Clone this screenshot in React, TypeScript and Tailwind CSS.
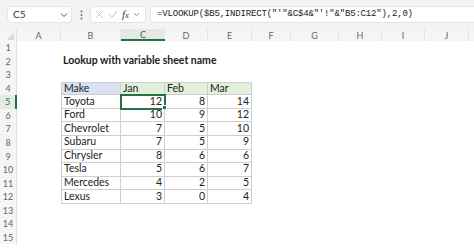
import React from 'react'

const cols = [
  { l: 'A', w: 44 },
  { l: 'B', w: 60 },
  { l: 'C', w: 44 },
  { l: 'D', w: 43 },
  { l: 'E', w: 44 },
  { l: 'F', w: 39 },
  { l: 'G', w: 48 },
  { l: 'H', w: 43 },
  { l: 'I', w: 43 },
  { l: 'J', w: 44 },
  { l: '', w: 40 },
]

const data: [string, number, number, number][] = [
  ['Toyota', 12, 8, 14],
  ['Ford', 10, 9, 12],
  ['Chevrolet', 7, 5, 10],
  ['Subaru', 7, 5, 9],
  ['Chrysler', 8, 6, 6],
  ['Tesla', 5, 6, 7],
  ['Mercedes', 4, 2, 5],
  ['Lexus', 3, 0, 4],
]

const ROW = 'h-[13.57px]'

function TopBar() {
  return (
    <div className="h-[29px] bg-[#f3f3f3] flex items-center">
      <div className="ml-[7px] w-[65px] h-[17px] bg-white rounded-[4px] border border-[#e4e4e4] flex items-center justify-between pl-[5px] pr-[3px]">
        <span className="text-[10px] text-[#333]">C5</span>
        <svg width="8" height="6" viewBox="0 0 8 6" className="text-[#555]">
          <path d="M1 1.5 L4 4.5 L7 1.5" fill="none" stroke="currentColor" strokeWidth="1" />
        </svg>
      </div>
      <div className="w-[18px] flex justify-center">
        <svg width="3" height="10" viewBox="0 0 3 10">
          <circle cx="1.5" cy="1.5" r="0.9" fill="#666" />
          <circle cx="1.5" cy="5" r="0.9" fill="#666" />
          <circle cx="1.5" cy="8.5" r="0.9" fill="#666" />
        </svg>
      </div>
      <div className="w-[56px] h-[17px] bg-white rounded-[4px] border border-[#e4e4e4] flex items-center pl-[4px] gap-[4px]">
        <svg width="9" height="9" viewBox="0 0 9 9">
          <path d="M1 1 L8 8 M8 1 L1 8" stroke="#c8c8c8" strokeWidth="1" />
        </svg>
        <svg width="10" height="9" viewBox="0 0 10 9">
          <path d="M1 4.5 L3.8 7.5 L9 1" fill="none" stroke="#c8c8c8" strokeWidth="1" />
        </svg>
        <span className="italic text-[11px] font-['Liberation_Serif',serif] text-[#444] leading-none">
          f<span className="text-[9px]">x</span>
        </span>
        <svg width="7" height="5" viewBox="0 0 7 5">
          <path d="M1 1 L3.5 3.8 L6 1" fill="none" stroke="#888" strokeWidth="0.9" />
        </svg>
      </div>
      <div className="ml-[4px] flex-1 h-[17px] bg-white rounded-l-[4px] border border-r-0 border-[#e4e4e4] flex items-center pl-[6px]">
        <span className="font-['Liberation_Mono',monospace] text-[9px] text-[#222] tracking-[-0.02em] whitespace-nowrap">
          =VLOOKUP($B5,INDIRECT("'"&amp;C$4&amp;"'!"&amp;"B5:C12"),2,0)
        </span>
      </div>
    </div>
  )
}

function ColHeaders() {
  return (
    <div className="flex h-[12px] bg-[#f5f5f5]">
      <div className="w-[17px] shrink-0 relative border-r border-[#e0e0e0]">
        <svg width="7" height="7" viewBox="0 0 7 7" className="absolute right-[2px] bottom-[1px]">
          <path d="M7 0 L7 7 L0 7 Z" fill="#d8d8d8" />
        </svg>
      </div>
      {cols.map((c, i) => (
        <div
          key={i}
          style={{ width: c.w }}
          className={
            'shrink-0 flex items-center justify-center text-[9px] leading-none ' +
            (c.l === 'C'
              ? 'bg-[#e5e9e6] text-[#217346] border-b-2 border-[#217346]'
              : 'text-[#666] border-r border-[#e6e6e6]')
          }
        >
          {c.l}
        </div>
      ))}
    </div>
  )
}

function Cell({
  w,
  children,
  className = '',
}: {
  w: number
  children?: React.ReactNode
  className?: string
}) {
  return (
    <div style={{ width: w }} className={'shrink-0 flex items-center text-[10.5px] text-[#222] px-[2px] ' + className}>
      {children}
    </div>
  )
}

export default function App() {
  const rows = Array.from({ length: 15 }, (_, i) => i + 1)
  return (
    <div className="w-[474px] h-[248px] overflow-hidden bg-white font-['Lato',sans-serif]">
      <TopBar />
      <ColHeaders />
      {rows.map((r) => {
        const d = r >= 5 && r <= 12 ? data[r - 5] : null
        return (
          <div key={r} className={'flex ' + ROW}>
            <div
              className={
                'w-[17px] shrink-0 flex items-center justify-center text-[9px] ' +
                (r === 5
                  ? 'bg-[#e5e9e6] text-[#217346] border-r-2 border-[#217346]'
                  : 'bg-[#f5f5f5] text-[#666] border-r border-[#e0e0e0]')
              }
            >
              {r}
            </div>
            <Cell w={44} />
            {r === 2 && (
              <Cell w={200} className="font-bold whitespace-nowrap">
                Lookup with variable sheet name
              </Cell>
            )}
            {r === 4 && (
              <>
                <Cell w={60} className="bg-[#d9e1f2] border border-[#cfcfcf]">Make</Cell>
                <Cell w={44} className="bg-[#e2efda] border border-l-0 border-[#cfcfcf]">Jan</Cell>
                <Cell w={43} className="bg-[#e2efda] border border-l-0 border-[#cfcfcf]">Feb</Cell>
                <Cell w={44} className="bg-[#e2efda] border border-l-0 border-[#cfcfcf]">Mar</Cell>
              </>
            )}
            {d && (
              <>
                <Cell w={60} className="border border-t-0 border-[#cfcfcf]">{d[0]}</Cell>
                <Cell
                  w={44}
                  className={
                    'justify-end border-b border-r border-[#cfcfcf] relative ' +
                    (r === 5 ? 'outline-2 -outline-offset-1 outline-[#217346]' : '')
                  }
                >
                  {d[1]}
                  {r === 5 && (
                    <span className="absolute -right-[2.5px] -bottom-[2.5px] w-[5px] h-[5px] bg-[#217346] border border-white" />
                  )}
                </Cell>
                <Cell w={43} className="justify-end border-b border-r border-[#cfcfcf]">{d[2]}</Cell>
                <Cell w={44} className="justify-end border-b border-r border-[#cfcfcf]">{d[3]}</Cell>
              </>
            )}
          </div>
        )
      })}
    </div>
  )
}
